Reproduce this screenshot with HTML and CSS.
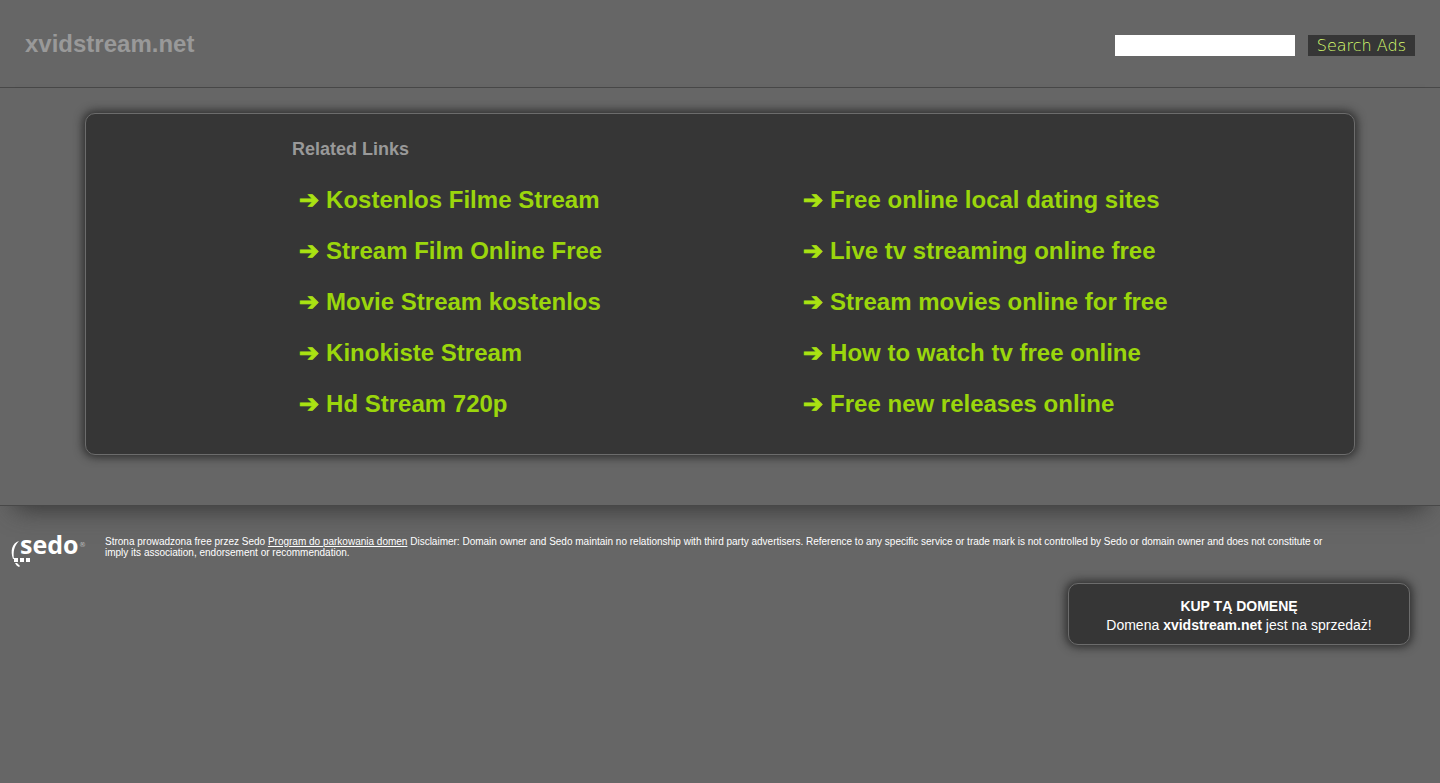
FILE: index.html
```html
<!DOCTYPE html>
<html lang="pl">

<head>
    <meta charset="utf-8">
    <meta name="viewport" content="width=device-width, initial-scale=1">
    <title>xvidstream.net</title>
    <link rel="stylesheet" href="styles.css">
</head>

<body>
    <header class="header">
        <h1>xvidstream.net</h1>
        <form class="search">
            <input type="text" name="keyword" aria-label="Search Ads">
            <button type="submit">Search Ads</button>
        </form>
    </header>

    <main class="content">
        <section class="box related">
            <h2>Related Links</h2>
            <ul class="links">
                <li><a href="#">Kostenlos Filme Stream</a></li>
                <li><a href="#">Stream Film Online Free</a></li>
                <li><a href="#">Movie Stream kostenlos</a></li>
                <li><a href="#">Kinokiste Stream</a></li>
                <li><a href="#">Hd Stream 720p</a></li>
                <li><a href="#">Free online local dating sites</a></li>
                <li><a href="#">Live tv streaming online free</a></li>
                <li><a href="#">Stream movies online for free</a></li>
                <li><a href="#">How to watch tv free online</a></li>
                <li><a href="#">Free new releases online</a></li>
            </ul>
        </section>
    </main>

    <footer class="footer">
        <div class="imprint">
            <svg class="logo" width="76" height="36" viewBox="0 0 76 36" fill="#fff">
                <path d="M9 9C2 11 0 19 3 27L4 27C3 20 4 14 9 9z" />
                <path d="M4 26h4v4H4zM10 26h4v4h-4zM16 26h4v4h-4z" />
                <path d="M5 31h2l3 3-1 1c-2-1-3-2-4-4z" />
                <text class="logo-name" x="10" y="22">sedo</text>
                <text class="logo-mark" x="69" y="15">®</text>
            </svg>
            <p>Strona prowadzona free przez Sedo <a href="#">Program do parkowania domen</a> Disclaimer: Domain owner and Sedo maintain no relationship with third party advertisers. Reference to any specific service or trade mark is not controlled by Sedo or domain owner and does not constitute or imply its association, endorsement or recommendation.</p>
        </div>

        <div class="box sale">
            <strong>KUP TĄ DOMENĘ</strong><br>
            Domena <strong>xvidstream.net</strong> jest na sprzedaż!
        </div>
    </footer>
</body>

</html>
```

FILE: styles.css
```css
body {
    background-color: #666;
    margin: 0;
    color: #fff;
    font-family: 'Liberation Sans', Arial, sans-serif;
}

.header {
    display: flex;
    justify-content: space-between;
    align-items: center;
    height: 87px;
    padding: 0 25px;
    border-bottom: 1px solid #484848;
}

h1 {
    margin: 0;
    color: #999;
    font-size: 24px;
    line-height: 28px;
}

.search {
    display: flex;
    gap: 13px;
    padding-top: 4px;
}

.search input {
    width: 180px;
    height: 21px;
    padding: 0 4px;
    border: none;
    background-color: #fff;
    box-sizing: border-box;
}

.search button {
    height: 21px;
    padding: 0 9px;
    border: none;
    background-color: #363636;
    color: #d8ff70;
    font-family: 'DejaVu Sans', sans-serif;
    font-size: 16px;
    font-weight: 200;
    line-height: 21px;
    cursor: pointer;
}

.box {
    background-color: #363636;
    border: 1px solid #6c6c6c;
    border-radius: 10px;
    box-shadow: 0 0 10px 2px #2a2a2a;
}

.content {
    padding: 25px 85px 50px;
    border-bottom: 1px solid #484848;
    box-shadow: 0 17px 24px -15px #333;
}

.related {
    padding: 25px 54px 25px 206px;
}

h2 {
    margin: 0 0 15px;
    color: #999;
    font-size: 18px;
    line-height: 20px;
}

.links {
    display: grid;
    grid-template-columns: 1fr 1fr;
    grid-template-rows: repeat(5, 51px);
    grid-auto-flow: column;
    align-items: center;
    margin: 0;
    padding: 0;
    list-style: none;
}

.links a {
    display: flex;
    align-items: center;
    gap: 7px;
    padding-left: 7px;
    color: #9bd60c;
    font-size: 24px;
    font-weight: bold;
    line-height: 28px;
    text-decoration: none;
}

.links a::before {
    content: "➔";
    color: #a9e312;
    font-family: 'DejaVu Sans', sans-serif;
    -webkit-text-stroke: 1px #a9e312;
}

.footer {
    padding: 26px 30px 30px 10px;
}

.imprint {
    display: flex;
    gap: 19px;
}

.logo {
    flex: none;
    overflow: visible;
}

.logo-name {
    font: bold 25px 'Open Sans', sans-serif;
}

.logo-mark {
    font: 7px 'DejaVu Sans', sans-serif;
    fill: #bbb;
}

.imprint p {
    margin: 4px 0 0;
    padding-right: 75px;
    font-size: 10px;
    line-height: 11px;
}

.imprint a {
    color: #fff;
}

.sale {
    width: 340px;
    margin: 15px 0 0 auto;
    padding: 13px 0 9px;
    font-size: 14px;
    line-height: 19px;
    text-align: center;
}
```
